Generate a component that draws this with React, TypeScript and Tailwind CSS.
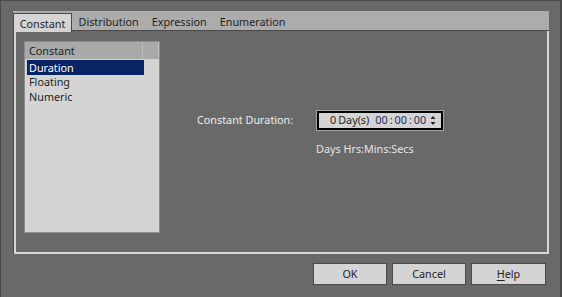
import { useState } from "react";

const tabs = ["Constant", "Distribution", "Expression", "Enumeration"];
const items = ["Duration", "Floating", "Numeric"];

export default function App() {
  const [selected, setSelected] = useState("Duration");

  return (
    <div
      className="flex h-[297px] w-[562px] flex-col border-l border-r-2 border-t border-[#4a4a4a] bg-[#696969] pl-3 pr-[11px] pt-[10px] text-[10.8px] text-[#1f1f1f]"
      style={{ fontFamily: '"Noto Sans", "Liberation Sans", sans-serif' }}
    >
      {/* tab strip */}
      <div className="flex h-5 items-end bg-[#acacac]">
        {tabs.map((t, i) =>
          i === 0 ? (
            <div
              key={t}
              className="relative -mb-px flex h-[19px] w-[59px] items-center justify-center border-l border-r border-t border-[#4a4a4a] bg-[#d4d4d4] pt-[2px]"
            >
              {t}
            </div>
          ) : (
            <div key={t} className="flex h-[18px] items-center border-b border-[#4a4a4a] px-[6.5px] pt-px">
              {t}
            </div>
          )
        )}
        <div className="h-[18px] flex-1 border-b border-[#4a4a4a]" />
      </div>

      {/* panel */}
      <div className="h-[223px] w-[536px] border-l border-[#4a4a4a]">
        <div className="flex h-full border-2 border-t-0 border-[#d6d6d6] pl-2 pt-[10px]">
          {/* list */}
          <div className="flex h-[192px] w-[136px] flex-col border border-[#8c8c8c] bg-[#d4d4d4]">
            <div className="flex h-[17px] bg-[#a9a9a9]">
              <div className="flex w-[118px] items-center border-r border-[#bdbdbd] pl-1 pt-px">Constant</div>
              <div className="flex-1 border-r border-[#bdbdbd]" />
            </div>
            <div className="flex flex-col pl-[2px] pt-px">
              {items.map((it) => (
                <div
                  key={it}
                  onClick={() => setSelected(it)}
                  className={
                    "flex h-[14.5px] w-[117px] items-center pl-[2px] pt-px " +
                    (selected === it ? "bg-[#0a2463] text-white" : "")
                  }
                >
                  {it}
                </div>
              ))}
            </div>
          </div>

          {/* value */}
          <div className="ml-[37px] mt-[69px] flex flex-col">
            <div className="flex items-center">
              <span className="w-[119px] text-[#eeeeee]">Constant Duration:</span>
              <div className="flex h-[21px] w-[128px] items-center border border-[#a5a5a5]">
                <div className="flex h-full w-full items-center border-2 border-black bg-[#d4d4d4] pl-[11px] pr-[5px]">
                  <span>0</span>
                  <span className="ml-[2px]">Day(s)</span>
                  <span className="ml-[6px] flex text-[#1b2a5a]">
                    <span>00</span>
                    <span className="mx-[2px]">:</span>
                    <span>00</span>
                    <span className="mx-[2px]">:</span>
                    <span>00</span>
                  </span>
                  <svg width="6" height="11" viewBox="0 0 6 11" className="ml-auto">
                    <path d="M3 1 L5.5 4 L0.5 4 Z" fill="#222" />
                    <path d="M0.5 7 L5.5 7 L3 10 Z" fill="#222" />
                  </svg>
                </div>
              </div>
            </div>
            <div className="ml-[119px] mt-[10px] text-[#e6e6e6]">Days Hrs:Mins:Secs</div>
          </div>
        </div>
      </div>

      {/* buttons */}
      <div className="mr-[3px] mt-[9px] flex justify-end gap-[5px]">
        <button className="h-[22px] w-[74px] border border-[#4a4a4a] bg-[#d4d4d4]">OK</button>
        <button className="h-[22px] w-[74px] border border-[#4a4a4a] bg-[#d4d4d4]">Cancel</button>
        <button className="h-[22px] w-[75px] border border-[#4a4a4a] bg-[#d4d4d4]">
          <span className="underline underline-offset-2">H</span>elp
        </button>
      </div>
    </div>
  );
}
